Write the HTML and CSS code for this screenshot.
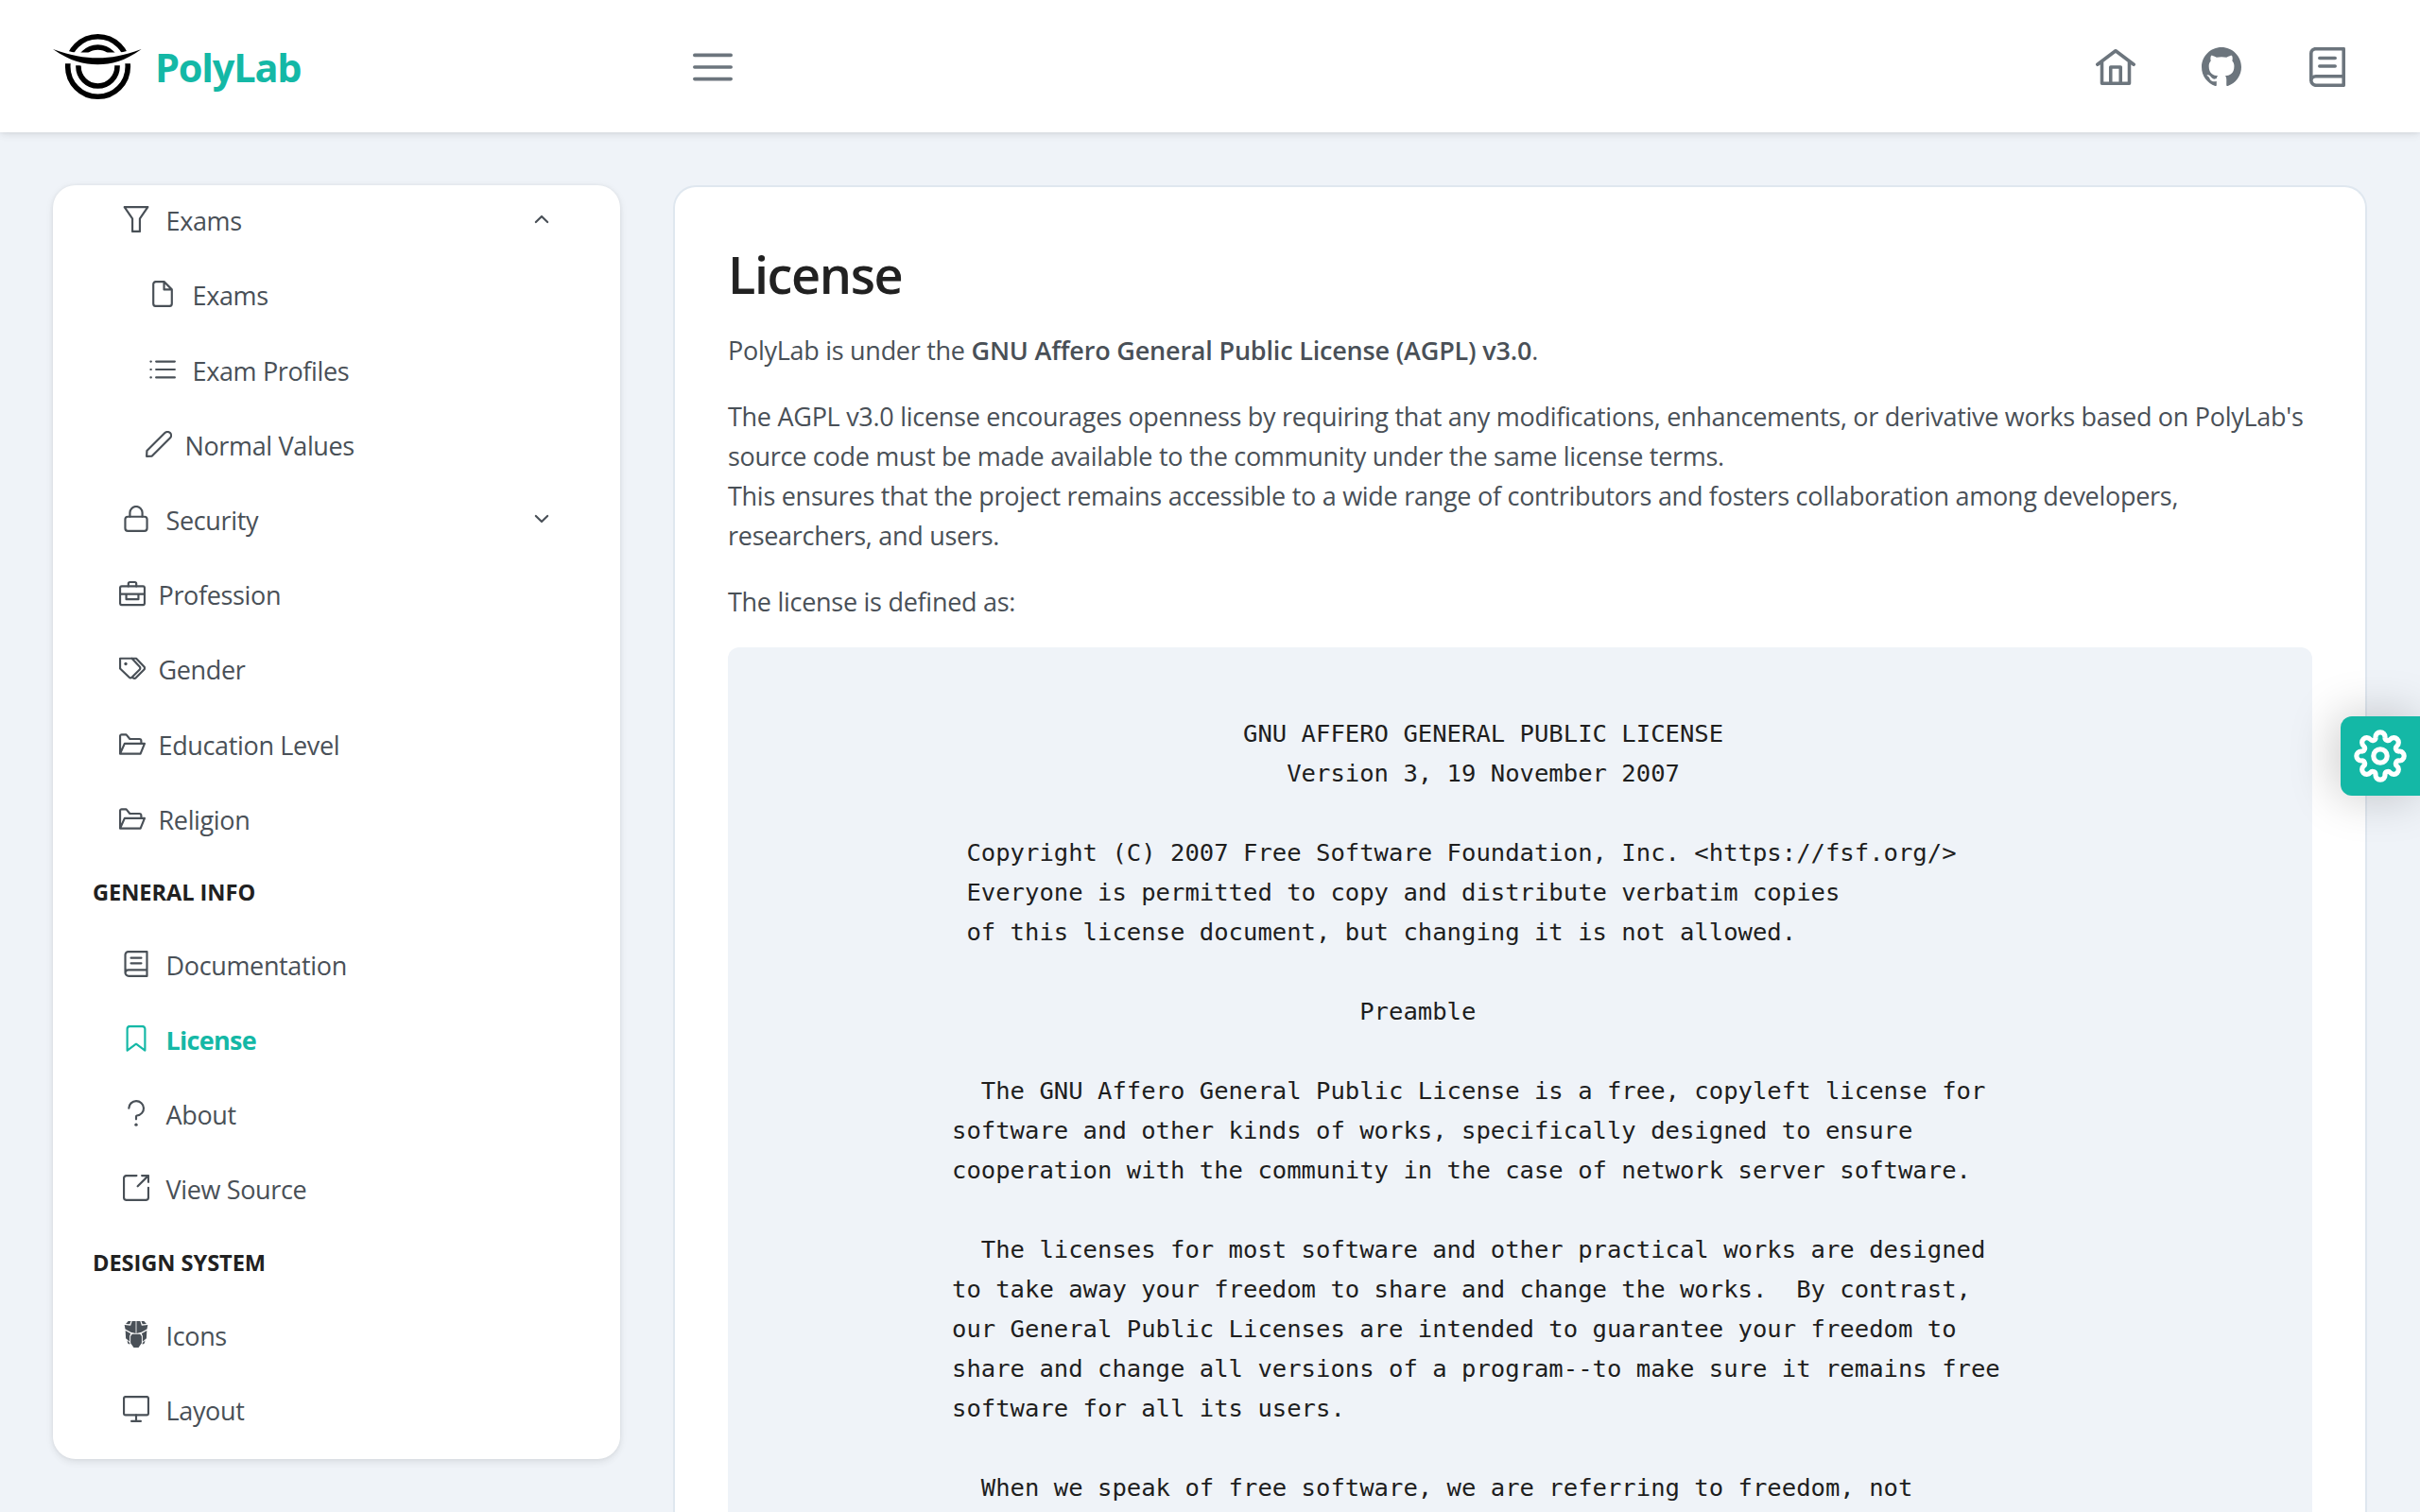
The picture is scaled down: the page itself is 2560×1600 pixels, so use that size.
FILE: index.html
```
<!DOCTYPE html>
<html lang="en">
<head>
<meta charset="utf-8">
<title>PolyLab - License</title>
<link rel="stylesheet" href="styles.css">
</head>
<body>
<svg class="sprite" aria-hidden="true">
  <symbol id="bars" viewBox="0 0 20 20"><path d="M.85 4h18.3M.85 10h18.3M.85 16h18.3"/></symbol>
  <symbol id="home" viewBox="0 0 20 20"><path d="M.85 8.7 10 1.8l9.15 6.9M3.1 7.2v11h13.8v-11M7.5 18V10h5v8"/></symbol>
  <symbol id="github" viewBox="0 0 16 16"><path class="solid" d="M8 0C3.58 0 0 3.58 0 8c0 3.54 2.29 6.53 5.47 7.59.4.07.55-.17.55-.38 0-.19-.01-.82-.01-1.49-2.01.37-2.53-.49-2.69-.94-.09-.23-.48-.94-.82-1.13-.28-.15-.68-.52-.01-.53.63-.01 1.08.58 1.23.82.72 1.21 1.87.87 2.33.66.07-.52.28-.87.51-1.07-1.78-.2-3.64-.89-3.64-3.95 0-.87.31-1.59.82-2.15-.08-.2-.36-1.02.08-2.12 0 0 .67-.21 2.2.82.64-.18 1.32-.27 2-.27s1.36.09 2 .27c1.53-1.04 2.2-.82 2.2-.82.44 1.1.16 1.92.08 2.12.51.56.82 1.27.82 2.15 0 3.07-1.87 3.75-3.65 3.95.29.25.54.73.54 1.48 0 1.07-.01 1.93-.01 2.2 0 .21.15.46.55.38A8.01 8.01 0 0 0 16 8c0-4.42-3.58-8-8-8z"/></symbol>
  <symbol id="book" viewBox="0 0 20 20"><path d="M18.2.8H4.1a2.3 2.3 0 0 0-2.3 2.3v13.5a2.6 2.6 0 0 0 2.6 2.6h13.8zM18.2 14.6H4.2a2.4 2.4 0 0 0-2.4 2.3M6.1 5.5h7.8M6.1 9.5h7.8"/></symbol>
  <symbol id="filter" viewBox="0 0 20 20"><path d="M1.2.75h17.6L12.8 9.6v9.65H7.2V9.6z"/></symbol>
  <symbol id="file" viewBox="0 0 20 20"><path d="M11.1.75H5a2 2 0 0 0-2 2v14.5a2 2 0 0 0 2 2h10a2 2 0 0 0 2-2V6.7L11.1.75v5.95H17"/></symbol>
  <symbol id="list" viewBox="0 0 20 20"><path d="M5.1 4h14.1M5.1 10h14.1M5.1 16h14.1M1 4h.3M1 10h.3M1 16h.3"/></symbol>
  <symbol id="pencil" viewBox="0 0 20 20"><path d="M.8 19.2 1 15 14.6 1.5a2.7 2.7 0 0 1 3.9 3.9L4.9 19z"/></symbol>
  <symbol id="lock" viewBox="0 0 20 20"><rect x="1.75" y="8.4" width="16.5" height="10.8" rx="2"/><path d="M5.3 8.4V5.4a4.7 4.7 0 0 1 9.4 0v3"/></symbol>
  <symbol id="briefcase" viewBox="0 0 20 20"><rect x=".75" y="4.6" width="18.5" height="14" rx="1.2"/><path d="M7 4.6V2.6a1.2 1.2 0 0 1 1.2-1.2h3.6A1.2 1.2 0 0 1 13 2.6v2M.75 10.4h18.5M5.4 10.4v4h9.2v-4"/></symbol>
  <symbol id="tags" viewBox="0 0 20 20"><path d="M.75 2.7h8.9l5.9 6.3a1.4 1.4 0 0 1 0 2l-5.9 6a1.4 1.4 0 0 1-2 0L.75 10.4zM9.7 2.7h3.2l6 6.3a1.4 1.4 0 0 1 0 2L13 17a1.6 1.6 0 0 1-2.6.2"/><circle class="solid" cx="5" cy="6.8" r="1.2"/></symbol>
  <symbol id="folder" viewBox="0 0 20 20"><path d="M.75 17.6V4.3A1.2 1.2 0 0 1 2 3.1h3.4l2.7 3.3h7.2a1.4 1.4 0 0 1 1.4 1.4v2.1M.75 17.6l3.4-7.7h15.1l-3.1 7.7z"/></symbol>
  <symbol id="bookmark" viewBox="0 0 20 20"><path d="M3.3 19V2.75a2 2 0 0 1 2-2h9.4a2 2 0 0 1 2 2V19L10 14.1z"/></symbol>
  <symbol id="question" viewBox="0 0 20 20"><path d="M4.5 6.2A5.6 5.5 0 1 1 10.6 11.8Q10 12 10 12.7v1.8"/><circle class="solid" cx="10" cy="18.7" r="1.2"/></symbol>
  <symbol id="external" viewBox="0 0 20 20"><path d="M10.3.75H2.75a2 2 0 0 0-2 2v14.5a2 2 0 0 0 2 2h14.5a2 2 0 0 0 2-2V9.8M11.2 8.8l8-8M14.4.75h4.85V5.6"/></symbol>
  <symbol id="prime" viewBox="0 0 20 20"><path class="solid" d="M6.9 0h2.8v9.2L6 8.4 1.8 6.1 1.2 2.8l4.6.6zM13.1 0h-2.8v9.2l3.7-.8 4.2-2.3.6-3.3-4.6.6zM4 0h2.1l-.9 2.4-3-.3zM16 0h-2.1l.9 2.4 3-.3zM7 9.9h6l1.2 1.5v5.2L11.8 20H8.2l-2.4-3.4v-5.2zM1.9 7.1l4 2.3-.8 1.6v4.6L2.2 13zM18.1 7.1l-4 2.3.8 1.6v4.6l2.9-2.6zM3.2 14.6l2 1.8v1.2l-1.5-.8zM16.8 14.6l-2 1.8v1.2l1.5-.8z"/></symbol>
  <symbol id="desktop" viewBox="0 0 20 20"><rect x=".75" y=".75" width="18.5" height="13.8" rx="1.2"/><path d="M10 14.6v4.4M6.5 19.2h7"/></symbol>
  <symbol id="up" viewBox="0 0 20 20"><path d="M5.6 12.2 10 7.8l4.4 4.4"/></symbol>
  <symbol id="down" viewBox="0 0 20 20"><path d="M5.6 7.8 10 12.2l4.4-4.4"/></symbol>
</svg>

<header class="topbar">
  <a class="brand">
    <svg class="logo" viewBox="15 24 290 214">
      <defs>
        <clipPath id="crown"><path d="M0 0h330v86H0z"/></clipPath>
        <clipPath id="outer"><path d="M0 121h330v140H0z"/></clipPath>
        <clipPath id="inner"><path d="M0 127h330v140H0z"/></clipPath>
      </defs>
      <g fill="none" stroke="#000">
        <g clip-path="url(#crown)"><circle cx="161.5" cy="131" r="96" stroke-width="17"/><circle cx="161.5" cy="131" r="62" stroke-width="17"/></g>
        <circle cx="161.5" cy="131" r="96" stroke-width="17" clip-path="url(#outer)"/>
        <circle cx="161.5" cy="131" r="62" stroke-width="17" clip-path="url(#inner)"/>
      </g>
      <path d="M18 75C80 96 115 103 161 103S240 96 301 75C245 115 205 124 161 124S75 115 18 75z" fill="none" stroke="#fff" stroke-width="18"/>
      <path d="M18 75C80 96 115 103 161 103S240 96 301 75C245 115 205 124 161 124S75 115 18 75z"/>
    </svg>
    <span class="brand-name">PolyLab</span>
  </a>
  <svg class="icon-lg menu"><use href="#bars"/></svg>
  <nav class="actions">
    <svg class="icon-lg"><use href="#home"/></svg>
    <svg class="icon-lg"><use href="#github"/></svg>
    <svg class="icon-lg"><use href="#book"/></svg>
  </nav>
</header>

<div class="layout">
  <aside class="sidebar">
    <ul class="menu-list">
      <li class="item"><span class="fw"><svg class="icon"><use href="#filter"/></svg></span>Exams<svg class="icon toggler"><use href="#up"/></svg></li>
      <li class="item sub"><span class="fw"><svg class="icon"><use href="#file"/></svg></span>Exams</li>
      <li class="item sub"><span class="fw"><svg class="icon"><use href="#list"/></svg></span>Exam Profiles</li>
      <li class="item sub"><svg class="icon"><use href="#pencil"/></svg>Normal Values</li>
      <li class="item"><span class="fw"><svg class="icon"><use href="#lock"/></svg></span>Security<svg class="icon toggler"><use href="#down"/></svg></li>
      <li class="item"><svg class="icon"><use href="#briefcase"/></svg>Profession</li>
      <li class="item"><svg class="icon"><use href="#tags"/></svg>Gender</li>
      <li class="item"><svg class="icon"><use href="#folder"/></svg>Education Level</li>
      <li class="item"><svg class="icon"><use href="#folder"/></svg>Religion</li>
      <li class="section">GENERAL INFO</li>
      <li class="item"><span class="fw"><svg class="icon"><use href="#book"/></svg></span>Documentation</li>
      <li class="item active"><span class="fw"><svg class="icon"><use href="#bookmark"/></svg></span>License</li>
      <li class="item"><span class="fw"><svg class="icon"><use href="#question"/></svg></span>About</li>
      <li class="item"><span class="fw"><svg class="icon"><use href="#external"/></svg></span>View Source</li>
      <li class="section">DESIGN SYSTEM</li>
      <li class="item"><span class="fw"><svg class="icon"><use href="#prime"/></svg></span>Icons</li>
      <li class="item"><span class="fw"><svg class="icon"><use href="#desktop"/></svg></span>Layout</li>
    </ul>
  </aside>

  <main class="card">
    <h1>License</h1>
    <p>PolyLab is under the <strong>GNU Affero General Public License (AGPL) v3.0</strong>.</p>
    <p>The AGPL v3.0 license encourages openness by requiring that any modifications, enhancements, or derivative works based on PolyLab's source code must be made available to the community under the same license terms.<br>This ensures that the project remains accessible to a wide range of contributors and fosters collaboration among developers, researchers, and users.</p>
    <p>The license is defined as:</p>
    <div class="license-box">
<pre class="license-text">                    GNU AFFERO GENERAL PUBLIC LICENSE
                       Version 3, 19 November 2007

 Copyright (C) 2007 Free Software Foundation, Inc. &lt;https://fsf.org/&gt;
 Everyone is permitted to copy and distribute verbatim copies
 of this license document, but changing it is not allowed.

                            Preamble

  The GNU Affero General Public License is a free, copyleft license for
software and other kinds of works, specifically designed to ensure
cooperation with the community in the case of network server software.

  The licenses for most software and other practical works are designed
to take away your freedom to share and change the works.  By contrast,
our General Public Licenses are intended to guarantee your freedom to
share and change all versions of a program--to make sure it remains free
software for all its users.

  When we speak of free software, we are referring to freedom, not</pre>
    </div>
  </main>
</div>

<button class="config" aria-label="Settings">
  <svg viewBox="-28 -28 56 56"><path d="M19.86-4.99A5 5 0 1 1 19.86 4.99A3.13 3.13 0 0 0 17.57 10.52A5 5 0 1 1 10.52 17.57A3.13 3.13 0 0 0 4.99 19.86A5 5 0 1 1-4.99 19.86A3.13 3.13 0 0 0-10.52 17.57A5 5 0 1 1-17.57 10.52A3.13 3.13 0 0 0-19.86 4.99A5 5 0 1 1-19.86-4.99A3.13 3.13 0 0 0-17.57-10.52A5 5 0 1 1-10.52-17.57A3.13 3.13 0 0 0-4.99-19.86A5 5 0 1 1 4.99-19.86A3.13 3.13 0 0 0 10.52-17.57A5 5 0 1 1 17.57-10.52A3.13 3.13 0 0 0 19.86-4.99z"/><circle r="7.2"/></svg>
</button>
</body>
</html>
```
FILE: styles.css
```
* {
  box-sizing: border-box;
}

body {
  margin: 0;
  height: 1600px;
  overflow: hidden;
  background: #eff3f8;
  color: #495057;
  font: 27px/42px "Open Sans", "Noto Sans", sans-serif;
  letter-spacing: -0.28px;
}

.sprite {
  display: none;
}

.icon,
.icon-lg {
  fill: none;
  stroke: currentColor;
  stroke-width: 1.55;
  stroke-linecap: round;
  stroke-linejoin: round;
}

.solid {
  fill: currentColor;
  stroke: none;
}

.icon {
  width: 28px;
  height: 28px;
  flex: none;
}

.icon-lg {
  width: 42px;
  height: 42px;
  color: #6c757d;
  stroke-width: 1.7;
}

/* Top bar */
.topbar {
  position: relative;
  display: flex;
  align-items: center;
  height: 140px;
  padding: 1px 77px 0 56px;
  background: #fff;
  box-shadow: 0 6px 10px rgba(0, 0, 0, .02), 0 0 4px rgba(0, 0, 0, .05), 0 2px 8px rgba(0, 0, 0, .08);
}

.brand {
  display: flex;
  align-items: center;
  width: 677px;
}

.logo {
  width: 96px;
  height: 71px;
  margin: -1px 0 0 -1px;
}

.brand-name {
  margin: 0 0 0 13px;
  color: #14b8a6;
  font-size: 41.5px;
  font-weight: 700;
  letter-spacing: -1.2px;
}

.actions {
  display: flex;
  gap: 70px;
  margin-left: auto;
}

/* Page columns */
.layout {
  display: flex;
  align-items: flex-start;
  gap: 56px;
  height: 1460px;
  padding: 56px 56px 0;
}

.sidebar {
  width: 600px;
  height: 1348px;
  flex: none;
  overflow: hidden;
  border-radius: 24px;
  background: #fff;
  box-shadow: 0 6px 10px rgba(0, 0, 0, .02), 0 0 4px rgba(0, 0, 0, .05), 0 2px 8px rgba(0, 0, 0, .08);
}

.menu-list {
  margin: -2.4px 0 0;
  padding: 0 41px;
  list-style: none;
}

.item {
  display: flex;
  align-items: center;
  gap: 13.5px;
  height: 79.2px;
  padding: 2px 28px 0 29px;
  letter-spacing: -0.35px;
}

.item .icon {
  margin-top: -4px;
}

.item .toggler {
  margin-left: auto;
}

.sub {
  padding-left: 57px;
}

.fw {
  display: flex;
  justify-content: center;
  width: 36px;
}

.active {
  color: #14b8a6;
  font-weight: 700;
  letter-spacing: -0.7px;
}

.section {
  height: 75px;
  padding: 1px 0 0 1px;
  color: #212121;
  font-size: 23.6px;
  font-weight: 700;
  line-height: 75px;
  letter-spacing: -0.05px;
}

/* Content card, which carries on below the fold */
.card {
  flex: 1;
  height: 1404px;
  padding: 56px 56px 0;
  overflow: hidden;
  border: 2px solid #dfe7ef;
  border-bottom: 0;
  border-radius: 24px 24px 0 0;
  background: #fff;
}

h1 {
  margin: 0 0 24px;
  color: #212121;
  font-size: 54px;
  font-weight: 600;
  line-height: 72px;
  letter-spacing: -1.4px;
}

p {
  margin: 0 0 28px;
}

p:last-of-type {
  margin-bottom: 27px;
}

strong {
  font-weight: 600;
  letter-spacing: -0.19px;
}

.license-box {
  display: flex;
  justify-content: center;
  height: 915px;
  padding-top: 70px;
  border-radius: 12px 12px 0 0;
  background: #eff3f8;
}

.license-text {
  width: 1202px;
  margin: 0;
  color: #1e1e1e;
  font: 25.58px/42px "DejaVu Sans Mono", monospace;
  letter-spacing: 0;
}

/* Floating settings button */
.config {
  position: absolute;
  top: 758px;
  right: 0;
  width: 84px;
  height: 84px;
  padding: 14px;
  border: 0;
  border-radius: 12px 0 0 12px;
  background: #14b8a6;
  box-shadow: -4px 0 50px rgba(0, 0, 0, .22);
}

.config svg {
  display: block;
  width: 56px;
  height: 56px;
  fill: none;
  stroke: #fff;
  stroke-width: 5.2;
}
```
